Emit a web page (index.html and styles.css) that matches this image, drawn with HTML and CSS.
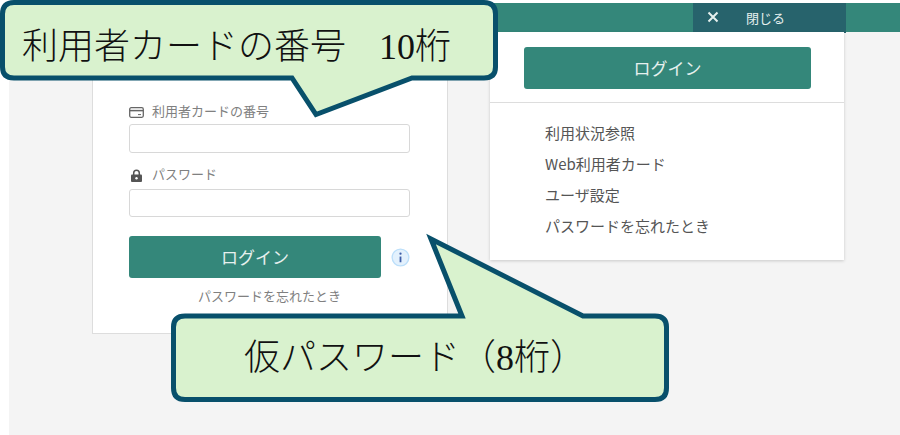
FILE: index.html
```html
<!DOCTYPE html>
<html lang="ja">
<head>
    <meta charset="UTF-8">
    <meta name="viewport" content="width=device-width, initial-scale=1.0">
    <title>ログイン</title>
    <link rel="stylesheet" href="styles.css">
</head>
<body>
    <div class="screen">
        <div class="top-bar">
            <div class="close-tab">
                <svg class="close-icon" viewBox="0 0 12 12" width="12" height="12"><path d="M1.5 1.5l9 9M10.5 1.5l-9 9" fill="none" stroke="#e6f0ee" stroke-width="2"/></svg>
                <span>閉じる</span>
            </div>
        </div>
        <div class="content">
            <div class="login-card">
                <label class="field-label">
                    <svg viewBox="0 0 15 11" width="15" height="11"><rect x="0.7" y="0.7" width="13.6" height="9.6" rx="1.5" fill="none" stroke="#666" stroke-width="1.3"/><path d="M1 3.6h13" stroke="#666" stroke-width="1.5"/><path d="M9 7.6h3" stroke="#666" stroke-width="1"/></svg>
                    <span>利用者カードの番号</span>
                </label>
                <div class="text-input"></div>
                <label class="field-label password-label">
                    <svg viewBox="0 0 15 13" width="15" height="13"><path d="M4.7 6V4a2.8 2.8 0 0 1 5.6 0v2" fill="none" stroke="#555" stroke-width="1.5"/><rect x="2" y="5.5" width="11" height="7.5" rx="1" fill="#555"/><circle cx="7.5" cy="9.2" r="1.2" fill="#fff"/></svg>
                    <span>パスワード</span>
                </label>
                <div class="text-input short"></div>
                <div class="login-row">
                    <div class="btn-login">ログイン</div>
                    <svg class="info-icon" viewBox="0 0 20 20" width="19" height="19"><circle cx="10" cy="10" r="8.8" fill="#e3f1fd" stroke="#bcdffa" stroke-width="1.4"/><circle cx="10" cy="6" r="1.2" fill="#3f5fa8"/><path d="M10 9v6" stroke="#3f5fa8" stroke-width="1.9"/></svg>
                </div>
                <div class="forgot">パスワードを忘れたとき</div>
            </div>
            <div class="menu-panel">
                <div class="menu-top">
                    <div class="btn-login btn-wide">ログイン</div>
                </div>
                <ul class="menu-list">
                    <li>利用状況参照</li>
                    <li>Web利用者カード</li>
                    <li>ユーザ設定</li>
                    <li>パスワードを忘れたとき</li>
                </ul>
            </div>
        </div>
    </div>

    <!-- callouts drawn over the screenshot -->
    <div class="callout callout-card">
        <svg viewBox="0 0 500 122" width="500" height="122"><path d="M14 2.5H484Q495.5 2.5 495.5 14V67Q495.5 78 484 78H412L316 114.5L292 78H14Q2.5 78 2.5 67V14Q2.5 2.5 14 2.5Z" fill="#d9f2ce" stroke="#08506b" stroke-width="5"/></svg>
        <span class="callout-text">利用者カードの番号<span class="gap"></span>10桁</span>
    </div>
    <div class="callout callout-pass">
        <svg viewBox="0 0 505 175" width="505" height="175"><path d="M17 86H294L263 9L415 86H487Q498.5 86 498.5 97V158Q498.5 169.5 487 169.5H17Q5.5 169.5 5.5 158V97Q5.5 86 17 86Z" fill="#d9f2ce" stroke="#08506b" stroke-width="5"/></svg>
        <span class="callout-text">仮パスワード（8桁）</span>
    </div>
</body>
</html>
```
FILE: styles.css
```css
html, body {
    margin: 0;
    height: 100%;
}

body {
    font-family: "Noto Sans CJK JP", "Noto Sans", sans-serif;
    background: #fff;
    color: #555;
    overflow: hidden;
    position: relative;
}

.screen {
    margin: 3px 0 0 9px;
    height: 432px;
    background: #f4f4f4;
}

.top-bar {
    height: 29px;
    background: #34877a;
    display: flex;
    justify-content: flex-end;
    padding-right: 54px;
}

.close-tab {
    width: 153px;
    height: 30px;
    background: #27636c;
    color: #e6f0ee;
    font-size: 13px;
    display: flex;
    align-items: center;
    box-sizing: border-box;
    padding: 0 0 2px 14px;
    gap: 27px;
}

.content {
    display: flex;
    align-items: flex-start;
    padding-left: 83px;
    gap: 42px;
}

.login-card {
    width: 356px;
    height: 302px;
    box-sizing: border-box;
    background: #fff;
    border: 1px solid #ddd;
    border-top: 0;
    padding: 70px 36px 0;
}

.field-label {
    display: flex;
    align-items: center;
    gap: 8px;
    height: 20px;
    font-size: 13px;
    color: #808080;
    margin-bottom: 2px;
}

.field-label span {
    padding-bottom: 3px;
}

.password-label {
    margin-top: 12px;
    margin-bottom: 4px;
}

.text-input {
    width: 281px;
    height: 29px;
    box-sizing: border-box;
    background: #fff;
    border: 1px solid #d8d8d8;
    border-radius: 3px;
}

.text-input.short {
    height: 28px;
}

.login-row {
    display: flex;
    align-items: center;
    gap: 10px;
    margin-top: 19px;
}

.btn-login {
    width: 252px;
    height: 42px;
    line-height: 41px;
    background: #34877a;
    color: #e6f0ee;
    border-radius: 3px;
    text-align: center;
    font-size: 17px;
}

.btn-wide {
    width: 287px;
}

.forgot {
    width: 281px;
    height: 20px;
    line-height: 20px;
    text-align: center;
    font-size: 13px;
    color: #808080;
    margin-top: 8px;
}

.menu-panel {
    width: 354px;
    height: 228px;
    background: #fff;
    box-shadow: 0 1px 3px rgba(0, 0, 0, 0.18);
}

.menu-top {
    height: 71px;
    box-sizing: border-box;
    padding: 15px 34px 0;
    border-bottom: 1px solid #ddd;
}

.menu-list {
    list-style: none;
    margin: 0;
    padding: 14px 0 0 55px;
    font-size: 15px;
    color: #555;
}

.menu-list li {
    height: 31px;
    line-height: 31px;
}

.callout {
    position: absolute;
}

.callout svg {
    display: block;
}

.callout-text {
    position: absolute;
    font-family: "Liberation Serif", "Noto Sans CJK JP", serif;
    font-size: 36px;
    font-weight: 300;
    color: #111;
    white-space: nowrap;
    line-height: 1;
}

.callout-card {
    left: 0;
    top: 0;
}

.callout-card .callout-text {
    left: 22px;
    top: 29px;
}

.gap {
    display: inline-block;
    width: 33px;
}

.callout-pass {
    left: 168px;
    top: 230px;
}

.callout-pass .callout-text {
    left: 76px;
    top: 110px;
}
```
